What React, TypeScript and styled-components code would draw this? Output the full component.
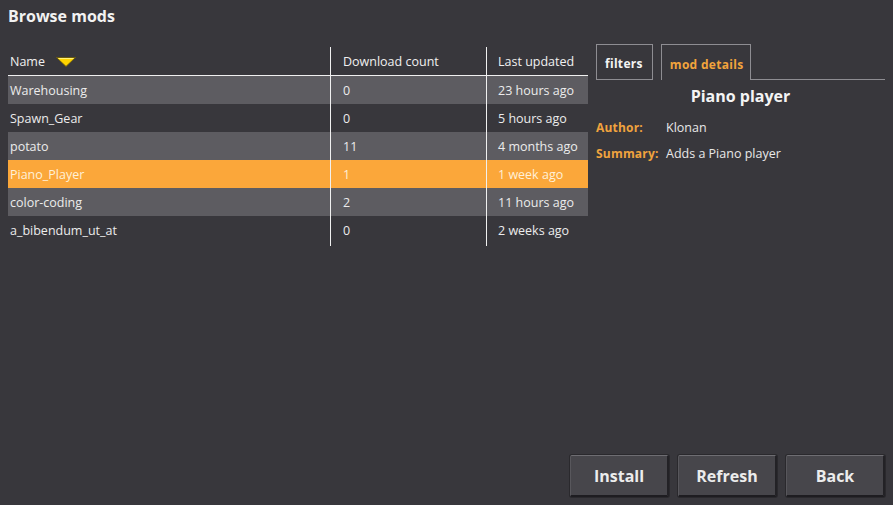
import React from "react";
import styled, { createGlobalStyle } from "styled-components";

const Global = createGlobalStyle`
  html, body { margin: 0; padding: 0; background: #38373c; }
  body { font-family: "Open Sans", "Noto Sans", sans-serif; color: #e8e8e8; }
  * { box-sizing: border-box; }
`;

const Page = styled.div`
  width: 893px;
  height: 505px;
  padding: 6px 8px 8px 8px;
  display: flex;
  flex-direction: column;
  background: #38373c;
`;

const Title = styled.h1`
  margin: 0;
  height: 20px;
  font-size: 16px;
  font-weight: 700;
  line-height: 20px;
  color: #f2f2f2;
`;

const Main = styled.div`
  display: flex;
  gap: 8px;
  margin-top: 18px;
  flex: 1;
`;

const Table = styled.div`
  width: 580px;
  margin-top: 3px;
  display: flex;
  flex-direction: column;
`;

const Row = styled.div<{ $bg: string; $header?: boolean }>`
  display: flex;
  height: ${(p) => (p.$header ? "29px" : "28px")};
  background: ${(p) => p.$bg};
  border-bottom: ${(p) => (p.$header ? "1px solid #f0f0f0" : "none")};
`;

const Cell = styled.div<{ $w: number; $sep?: boolean; $pad: number; $fg: string }>`
  width: ${(p) => p.$w}px;
  padding-left: ${(p) => p.$pad}px;
  border-left: ${(p) => (p.$sep ? "1px solid #f0f0f0" : "none")};
  display: flex;
  align-items: center;
  gap: 10px;
  font-size: 12.5px;
  color: ${(p) => p.$fg};
  white-space: nowrap;
`;

const HeaderCell = styled(Cell)`
  padding-top: 1px;
`;

const Tail = styled.div`
  display: flex;
  height: 2px;
`;

const SortArrow = () => (
  <svg width="22" height="12" viewBox="0 0 22 12">
    <path d="M1.5 1.5 H20.5 L11 10.5 Z" fill="#ffd400" stroke="#6a5a10" strokeWidth="1" strokeLinejoin="round" />
    <path d="M3.5 2.5 H18.5" stroke="#fff27a" strokeWidth="1" />
  </svg>
);

const Panel = styled.div`
  width: 290px;
  display: flex;
  flex-direction: column;
`;

const Tabs = styled.div`
  display: flex;
  height: 36px;
  align-items: stretch;
`;

const Tab = styled.div<{ $active?: boolean }>`
  padding: 3px ${(p) => (p.$active ? "7px" : "9px")} 0 8px;
  display: flex;
  align-items: center;
  border: 1px solid #8e8d92;
  border-bottom: ${(p) => (p.$active ? "none" : "1px solid #8e8d92")};
  font-size: 12px;
  font-weight: 700;
  letter-spacing: 0.3px;
  color: ${(p) => (p.$active ? "#f2a43c" : "#f4f4f4")};
  margin-right: ${(p) => (p.$active ? "0" : "8px")};
`;

const TabLine = styled.div`
  flex: 1;
  border-bottom: 1px solid #8e8d92;
`;

const DetailTitle = styled.div`
  text-align: center;
  font-size: 16px;
  font-weight: 700;
  color: #f4f4f4;
  margin-top: 5px;
  height: 22px;
  line-height: 22px;
`;

const Fields = styled.div`
  margin-top: 11px;
  display: grid;
  grid-template-columns: 70px 1fr;
  row-gap: 6px;
`;

const Label = styled.div`
  font-size: 12px;
  font-weight: 700;
  color: #f0a33e;
  height: 20px;
  line-height: 20px;
  letter-spacing: 0.2px;
`;

const Value = styled.div`
  font-size: 12.5px;
  color: #e8e8e8;
  height: 20px;
  line-height: 20px;
`;

const Footer = styled.div`
  display: flex;
  justify-content: flex-end;
  gap: 9px;
`;

const Button = styled.button`
  width: 99px;
  height: 42px;
  background: #47464b;
  border: none;
  border-top: 1px solid #6e6d72;
  border-left: 1px solid #58575c;
  border-right: 2px solid #232226;
  border-bottom: 2px solid #1e1d21;
  border-radius: 2px;
  box-shadow: 0 0 0 1px #2a292d;
  color: #ececec;
  font-family: "Open Sans", "Noto Sans", sans-serif;
  font-size: 16px;
  font-weight: 700;
  cursor: pointer;
`;

const widths = [322, 156, 102];
const pads = [2, 12, 11];

const mods = [
  ["Warehousing", "0", "23 hours ago"],
  ["Spawn_Gear", "0", "5 hours ago"],
  ["potato", "11", "4 months ago"],
  ["Piano_Player", "1", "1 week ago"],
  ["color-coding", "2", "11 hours ago"],
  ["a_bibendum_ut_at", "0", "2 weeks ago"],
];

export default function App() {
  return (
    <>
      <Global />
      <Page>
        <Title>Browse mods</Title>
        <Main>
          <Table>
            <Row $bg="transparent" $header>
              {["Name", "Download count", "Last updated"].map((h, i) => (
                <HeaderCell key={h} $w={widths[i]} $sep={i > 0} $pad={pads[i]} $fg="#f0f0f0">
                  {h}
                  {i === 0 && <SortArrow />}
                </HeaderCell>
              ))}
            </Row>
            {mods.map((m, r) => {
              const selected = r === 3;
              const bg = selected ? "#fba73a" : r % 2 === 0 ? "#5d5c61" : "transparent";
              const fg = selected ? "#fff0d8" : "#ececec";
              return (
                <Row key={m[0]} $bg={bg}>
                  {m.map((v, i) => (
                    <Cell key={i} $w={widths[i]} $sep={i > 0} $pad={pads[i]} $fg={fg}>
                      {v}
                    </Cell>
                  ))}
                </Row>
              );
            })}
            <Tail>
              {widths.map((w, i) => (
                <Cell key={i} $w={w} $sep={i > 0} $pad={0} $fg="#fff" />
              ))}
            </Tail>
          </Table>
          <Panel>
            <Tabs>
              <Tab>filters</Tab>
              <Tab $active>mod details</Tab>
              <TabLine />
            </Tabs>
            <DetailTitle>Piano player</DetailTitle>
            <Fields>
              <Label>Author:</Label>
              <Value>Klonan</Value>
              <Label>Summary:</Label>
              <Value>Adds a Piano player</Value>
            </Fields>
          </Panel>
        </Main>
        <Footer>
          <Button>Install</Button>
          <Button>Refresh</Button>
          <Button>Back</Button>
        </Footer>
      </Page>
    </>
  );
}
